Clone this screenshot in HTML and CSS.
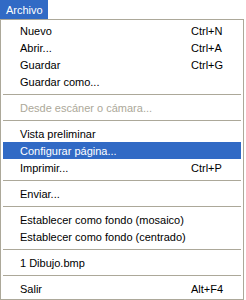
FILE: index.html
```html
<!DOCTYPE html>
<html lang="es">
<head>
<meta charset="utf-8">
<link rel="stylesheet" href="styles.css">
</head>
<body>
<div class="menubar"><span class="title">Archivo</span></div>
<div class="menu">
  <div class="item"><span class="label">Nuevo</span><span class="key">Ctrl+N</span></div>
  <div class="item"><span class="label">Abrir...</span><span class="key">Ctrl+A</span></div>
  <div class="item"><span class="label">Guardar</span><span class="key">Ctrl+G</span></div>
  <div class="item"><span class="label">Guardar como...</span></div>
  <div class="sep"></div>
  <div class="item disabled"><span class="label">Desde escáner o cámara...</span></div>
  <div class="sep"></div>
  <div class="item"><span class="label">Vista preliminar</span></div>
  <div class="item active"><span class="label">Configurar página...</span></div>
  <div class="item"><span class="label">Imprimir...</span><span class="key">Ctrl+P</span></div>
  <div class="sep"></div>
  <div class="item"><span class="label">Enviar...</span></div>
  <div class="sep"></div>
  <div class="item"><span class="label">Establecer como fondo (mosaico)</span></div>
  <div class="item"><span class="label">Establecer como fondo (centrado)</span></div>
  <div class="sep"></div>
  <div class="item"><span class="label">1 Dibujo.bmp</span></div>
  <div class="sep"></div>
  <div class="item"><span class="label">Salir</span><span class="key">Alt+F4</span></div>
</div>
</body>
</html>
```
FILE: styles.css
```css
html, body {
  margin: 0;
  padding: 0;
  background: #ffffff;
}
body {
  font-family: "Liberation Sans", Arial, sans-serif;
  font-size: 11px;
  color: #000000;
}
.menubar {
  display: flex;
  height: 19px;
}
.title {
  display: flex;
  align-items: center;
  width: 48px;
  height: 19px;
  box-sizing: border-box;
  padding-left: 6px;
  background: #316ac5;
  color: #ffffff;
}
.menu {
  width: 244px;
  box-sizing: border-box;
  border: 1px solid #aca899;
  padding: 2px 2px;
  background: #ffffff;
}
.item {
  display: grid;
  grid-template-columns: 171px auto;
  align-items: center;
  height: 17px;
  padding-left: 17px;
  white-space: nowrap;
}
.item.active {
  background: #316ac5;
  color: #ffffff;
}
.item.disabled {
  color: #aca899;
}
.sep {
  height: 9px;
  display: flex;
  align-items: center;
}
.sep::before {
  content: "";
  display: block;
  width: 100%;
  height: 1px;
  background: #aca899;
}
```
